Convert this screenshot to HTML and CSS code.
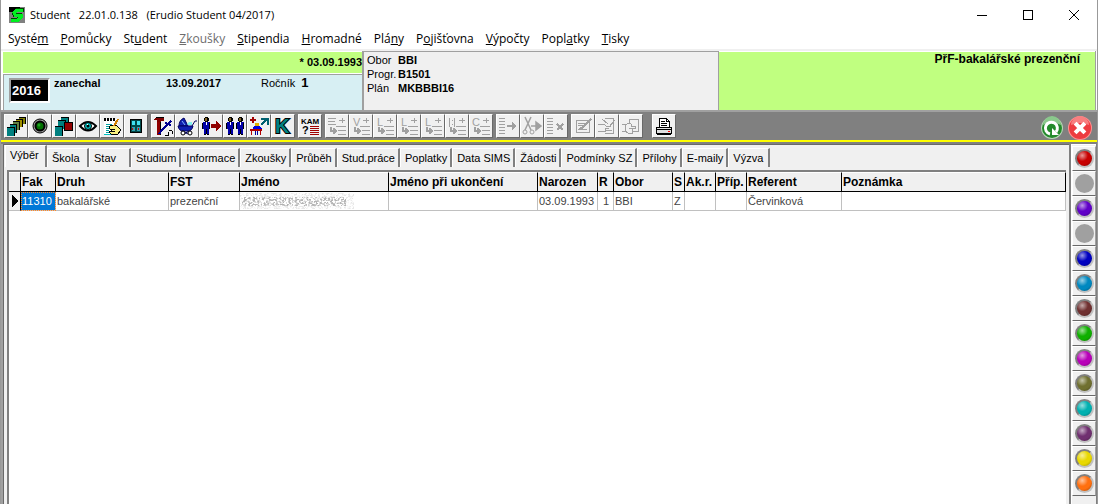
FILE: index.html
```
<!DOCTYPE html>
<html lang="cs">
<head>
  <meta charset="UTF-8">
  <meta name="viewport" content="width=device-width, initial-scale=1">
  <title>Student 22.01.0.138</title>
  <link rel="stylesheet" href="styles.css">
</head>
<body>
  <!-- shared icon parts -->
  <svg class="defs" aria-hidden="true">
    <defs>
      <symbol id="rows" viewBox="0 0 20 20">
        <path d="M12 4.500h6M15 2v5M9 10.500h10M11 14.500h8M11 18.500h8" stroke="#a0a0a0" fill="none"/>
        <path d="M3.500 11v4h4M6 12.500l3 2.500-3 2.500" stroke="#a0a0a0" stroke-width="2" fill="none"/>
      </symbol>
      <symbol id="man" viewBox="0 0 8 18">
        <path d="M3 0h3v1h1v3H6v1H3V4H2V1h1z" fill="#000"/>
        <path d="M3 1h2v3H3z" fill="#806020"/>
        <path d="M1 5h7v7H7v6H5v-5H4v5H2v-6H1z" fill="#0000a8"/>
        <path d="M0 6h1v6H0zM2 17h2v1H2zM5 17h2v1H5zM4 12h1v5H4zM7 6h1v6H7z" fill="#000"/>
        <path d="M4 5h1v3H4z" fill="#fff"/>
      </symbol>
      <filter id="noise" x="0" y="0" width="100%" height="100%">
        <feTurbulence type="fractalNoise" baseFrequency="0.450 0.600" numOctaves="2" seed="4"/>
        <feColorMatrix values="0 0 0 0 0.450  0 0 0 0 0.450  0 0 0 0 0.450  4 3 0 0 -3.200"/>
      </filter>
    </defs>
  </svg>

  <div class="window">
    <header class="titlebar">
      <svg class="app-icon" viewBox="0 0 16 16" aria-hidden="true">
        <path d="M0 0h16v16H0z" fill="#808080"/>
        <path d="M0 0h12L5 5H0z" fill="#000"/>
        <path d="M15 3H8L5 6l1 2h5v2l-2 3H2" fill="none" stroke="#004000" stroke-width="4"/>
        <path d="M14 3H8L5 6l1 2h6v2l-3 3H2" fill="none" stroke="#00f020" stroke-width="3"/>
      </svg>
      <h1>Student &nbsp; 22.01.0.138 &nbsp; (Erudio Student 04/2017)</h1>
      <div class="win-buttons">
        <button aria-label="Minimalizovat"><svg viewBox="0 0 10 10"><path d="M0 5.500h10"/></svg></button>
        <button aria-label="Maximalizovat"><svg viewBox="0 0 10 10"><path d="M.5.5h9v9h-9z"/></svg></button>
        <button aria-label="Zavřít"><svg viewBox="0 0 10 10"><path d="M0 0l10 10M10 0L0 10"/></svg></button>
      </div>
    </header>

    <nav class="menu">
      <button>Systé<u>m</u></button>
      <button><u>P</u>omůcky</button>
      <button>St<u>u</u>dent</button>
      <button disabled><u>Z</u>koušky</button>
      <button><u>S</u>tipendia</button>
      <button><u>H</u>romadné</button>
      <button>Plá<u>n</u>y</button>
      <button>P<u>o</u>jišťovna</button>
      <button><u>V</u>ýpočty</button>
      <button>Popl<u>a</u>tky</button>
      <button><u>T</u>isky</button>
    </nav>

    <section class="info">
      <div class="person">
        <div class="birth">* 03.09.1993</div>
        <div class="state">
          <input class="year" value="2016" aria-label="Rok" readonly>
          <b class="status">zanechal</b>
          <b class="date">13.09.2017</b>
          <span class="grade">Ročník <b>1</b></span>
        </div>
      </div>
      <dl class="study">
        <dt>Obor</dt><dd>BBI</dd>
        <dt>Progr.</dt><dd>B1501</dd>
        <dt>Plán</dt><dd>MKBBBI16</dd>
      </dl>
      <div class="faculty">PřF-bakalářské prezenční</div>
    </section>

    <div class="toolbar">
      <div class="group">
        <button aria-label="Výběr"><svg viewBox="0 0 20 20">
          <path d="M13 1h7v7h-7z" fill="#000"/><path d="M13 2h6v6h-6z" fill="#808000"/>
          <path d="M10 3h7v8h-7z" fill="#000"/><path d="M10 4h6v7h-6z" fill="#a09000"/>
          <path d="M7 5h7v9H7z" fill="#000"/><path d="M7 6h6v8H7z" fill="#608040"/>
          <path d="M4 8h7v9H4z" fill="#000"/><path d="M4 9h6v8H4z" fill="#008080"/>
          <path d="M1 11h8v9H1z" fill="#000"/><path d="M1 12h7v8H1z" fill="#008080"/>
        </svg></button>
        <button aria-label="Záznam"><svg class="smooth" viewBox="0 0 20 20">
          <circle cx="10" cy="10" r="7" fill="#a0a0a0" stroke="#000"/>
          <circle cx="10" cy="10" r="4.500" fill="#007000" stroke="#000" stroke-width="2"/>
          <circle cx="9" cy="9" r="1.500" fill="#20a020"/>
        </svg></button>
        <button aria-label="Kartotéka"><svg viewBox="0 0 20 20">
          <path d="M7 1h8v8H7z" fill="#000"/><path d="M7 2h7v7H7z" fill="#008080"/>
          <path d="M4 4h8v8H4z" fill="#000"/><path d="M4 5h7v8H4z" fill="#008080"/>
          <path d="M10 6h9v9h-9z" fill="#000"/><path d="M11 7h7v7h-7z" fill="#900000"/>
          <path d="M1 10h8v10H1z" fill="#000"/><path d="M1 11h7v9H1z" fill="#008080"/>
        </svg></button>
        <button aria-label="Náhled"><svg class="smooth" viewBox="0 0 20 20">
          <path d="M2 10q8-8 16 0-8 9-16 0z" fill="#fff" stroke="#000" stroke-width="2"/>
          <circle cx="10" cy="10" r="3.500" fill="#00c0c0" stroke="#000"/>
          <circle cx="10" cy="10" r="1.500"/><path d="M9 8h1v1H9z" fill="#fff"/>
        </svg></button>
        <button aria-label="Poznámky"><svg viewBox="0 0 20 20">
          <path d="M2 3h13v15H2z" fill="#fff"/><path d="M2 18.500h13" stroke="#00c0c0"/>
          <path d="M2 2h2v3H2zM5 2h2v3H5zM8 2h2v3H8zM11 2h2v3h-2z"/>
          <path d="M4 8.500h6M4 10.500h5M4 12.500h4M4 14.500h3M4 16.500h4" stroke="#00a0a0"/>
          <path d="M8 10l6-1 5 5-3 4H9l-2-2 3-1-3-3z" fill="#f8f080" stroke="#000"/>
          <path d="M9 13h4M9 15h4" stroke="#000"/>
          <path d="M16 3l-4 7" stroke="#d08000" stroke-width="2"/>
        </svg></button>
        <button aria-label="Okno"><svg viewBox="0 0 20 20">
          <path d="M4 3h12v14H4z" fill="#000"/><path d="M5 4h10v12H5z" fill="#004848"/>
          <path d="M6 5h3v4H6zM11 5h3v4h-3z" fill="#40e0f0"/>
          <path d="M6 11h3v4H6zM11 11h3v4h-3z" fill="#30a0b0"/>
          <path d="M6 12h1v2H6zM12 12h1v2h-1z" fill="#c00"/>
        </svg></button>
      </div>
      <div class="group">
        <button aria-label="Nástroje"><svg viewBox="0 0 20 20">
          <path d="M0 4l3-3h8v4H8v1H4V4z" fill="#800000"/>
          <path d="M4 6h4v13H4z" fill="#900000"/><path d="M7 6h1v13H7zM3 1h8v1H3z"/>
          <path d="M18 5l-3 3-3-1M15 8l-6 6-3 4M18 9l-3-1" fill="none" stroke="#000090" stroke-width="2"/>
          <path d="M12 19h3v-3M16 14l3 1v3" fill="none" stroke="#000"/>
        </svg></button>
        <button aria-label="Kočárek"><svg class="smooth" viewBox="0 0 20 20">
          <path d="M2 10q0-6 5-8l4 8z" fill="#1020b0" stroke="#000060"/>
          <path d="M1 10h15q-1 5-5 5H6q-4 0-5-5z" fill="#1020b0" stroke="#000060"/>
          <path d="M10 8l2-2h3v3h-4z" fill="#80f0f0"/>
          <path d="M15 10l3-5h2M5 15l6 3M12 15l-5 3" fill="none" stroke="#000060"/>
          <path d="M5 5l3 4" stroke="#80b0ff"/>
          <circle cx="6" cy="17" r="2" fill="#fff" stroke="#000"/>
          <circle cx="13" cy="17" r="2" fill="#fff" stroke="#000"/>
        </svg></button>
        <button aria-label="Převod studenta"><svg viewBox="0 0 20 20">
          <use href="#man" x="1" y="1" width="8" height="18"/>
          <path d="M10 8h5V5l5 5-5 5v-3h-5z" fill="#900000"/>
        </svg></button>
        <button aria-label="Kopie studenta"><svg viewBox="0 0 20 20">
          <use href="#man" x="1" y="1" width="8" height="18"/>
          <use href="#man" x="11" y="1" width="8" height="18"/>
        </svg></button>
        <button aria-label="Výuka"><svg viewBox="0 0 20 20">
          <path d="M1 4h6M4 1v6" stroke="#a00000" stroke-width="2"/>
          <path d="M12 9l6-6M12 3h7v6" fill="none" stroke="#006070" stroke-width="2"/>
          <path d="M6 7h4v3H6z" fill="#e0b000"/><path d="M5 10h6l2 3H4z" fill="#0000e0"/>
          <path d="M1 13h12v2H1zM2 15h1v4H2zM11 15h1v4h-1z" fill="#b00000"/>
          <path d="M6 15h1v4H6zM8 15h1v4H8z" fill="#0000a0"/>
        </svg></button>
        <button aria-label="Kredity"><svg viewBox="0 0 20 20">
          <text class="letter-k" x="2" y="17">K</text>
        </svg></button>
      </div>
      <div class="group">
        <button aria-label="Kam"><svg viewBox="0 0 20 20">
          <text class="letters" x="1" y="8">KAM</text>
          <text class="question" x="2" y="18">?</text>
          <path d="M10 10.500h9M10 12.500h9M10 14.500h9M10 16.500h9M10 18.500h9" stroke="#a00000"/>
        </svg></button>
      </div>
      <div class="group">
        <button disabled aria-label="Přidat řádek"><svg viewBox="0 0 20 20"><use href="#rows"/><path d="M1 2.500h8M1 5.500h7M1 8.500h8" stroke="#a0a0a0"/></svg></button>
        <button disabled aria-label="Přidat V"><svg viewBox="0 0 20 20"><use href="#rows"/><text class="mark" x="2" y="10">V</text></svg></button>
        <button disabled aria-label="Přidat L"><svg viewBox="0 0 20 20"><use href="#rows"/><text class="mark" x="2" y="10">L</text></svg></button>
        <button disabled aria-label="Přidat L 2"><svg viewBox="0 0 20 20"><use href="#rows"/><text class="mark" x="2" y="10">L</text></svg></button>
        <button disabled aria-label="Přidat L 3"><svg viewBox="0 0 20 20"><use href="#rows"/><text class="mark" x="2" y="10">L</text></svg></button>
        <button disabled aria-label="Přidat blok"><svg viewBox="0 0 20 20"><use href="#rows"/><path d="M2.500 2v9M7.500 2v9M5 4.500h1M5 8.500h1" stroke="#a0a0a0"/></svg></button>
        <button disabled aria-label="Přidat C"><svg viewBox="0 0 20 20"><use href="#rows"/><text class="mark" x="1" y="10">C</text></svg></button>
      </div>
      <div class="group">
        <button disabled aria-label="Přesunout"><svg viewBox="0 0 20 20">
          <path d="M1 2.500h6M1 5.500h6M1 8.500h6M1 11.500h6M1 14.500h6M1 17.500h6" stroke="#a0a0a0"/>
          <path d="M9 9h5V6l5 4-5 4v-3H9z" fill="#a0a0a0"/>
        </svg></button>
        <button disabled aria-label="Vyjmout"><svg class="smooth" viewBox="0 0 20 20">
          <path d="M3 1l6 13M9 1L3 14M9 10h5M14 6l5 4-5 4z" fill="#a0a0a0" stroke="#a0a0a0" stroke-width="1.500"/>
          <circle cx="3" cy="16" r="2" fill="none" stroke="#a0a0a0"/><circle cx="10" cy="16" r="2" fill="none" stroke="#a0a0a0"/>
        </svg></button>
        <button disabled aria-label="Smazat řádek"><svg viewBox="0 0 20 20">
          <path d="M1 2.500h6M1 5.500h6M1 8.500h6M1 11.500h6M1 14.500h6M1 17.500h6" stroke="#a0a0a0"/>
          <path d="M11 8l6 6M17 8l-6 6" stroke="#a0a0a0" stroke-width="2"/>
        </svg></button>
      </div>
      <div class="group">
        <button disabled aria-label="Upravit"><svg viewBox="0 0 20 20">
          <path d="M3.500 4.500h13v12h-13z" fill="none" stroke="#a0a0a0"/>
          <path d="M5 7.500h7M5 9.500h5M5 13.500h9" fill="none" stroke="#a0a0a0"/>
          <path d="M18 3l-9 9-3 1" fill="none" stroke="#a0a0a0" stroke-width="2"/>
        </svg></button>
        <button disabled aria-label="Upravit zápis"><svg viewBox="0 0 20 20">
          <path d="M7.500 2.500h9v15h-9M1 8.500h6l3 2h4M1 15.500h7l1-3h3" fill="none" stroke="#a0a0a0"/>
          <path d="M5 3l6 5M18 4l-6 7M9 14.500h6" stroke="#a0a0a0" fill="none"/>
        </svg></button>
        <button disabled aria-label="Předat"><svg viewBox="0 0 20 20">
          <path d="M8.500 7V3.500h9v12h-6M1 8.500h3v7H1M4 9l4-2 2 1v2h4v2H8M4 15l3 2h4v-5" fill="none" stroke="#a0a0a0"/>
        </svg></button>
      </div>
      <div class="group print">
        <button aria-label="Tisk"><svg viewBox="0 0 20 20">
          <path d="M5.500 11V2.500h7l3 3V11z" fill="#fff" stroke="#000"/>
          <path d="M7 5.500h4M7 7.500h6M7 9.500h6M12.500 2v3h3" fill="none" stroke="#000"/>
          <path d="M2.500 11.500h15v6h-15z" fill="#e0e0e0" stroke="#000"/>
          <path d="M2 13h16v1H2zM3 17h14v2H3z"/><path d="M14 15h2v1h-2z" fill="#f00"/>
        </svg></button>
      </div>
      <div class="round">
        <button aria-label="Obnovit"><svg class="smooth" viewBox="0 0 24 24">
          <circle cx="12" cy="12" r="11" fill="#b8d8b8"/><circle cx="12" cy="12" r="10" fill="#238a2b"/>
          <path d="M3 9a9 9 0 0 1 18 0q-9-5-18 0z" fill="#8ac88c"/>
          <path d="M10 18a6 6 0 1 1 6-2" fill="none" stroke="#fff" stroke-width="3"/><path d="M12 12v7h7z" fill="#fff"/>
        </svg></button>
        <button aria-label="Konec"><svg class="smooth" viewBox="0 0 24 24">
          <circle cx="12" cy="12" r="12" fill="#ff9090"/><circle cx="12" cy="12" r="11" fill="#ed3b40"/>
          <path d="M3 9a9 9 0 0 1 18 0q-9-4-18 0z" fill="#f87f80"/>
          <path d="M8.500 8.500l7 7M15.500 8.500l-7 7" stroke="#fff" stroke-width="4" stroke-linecap="square"/>
        </svg></button>
      </div>
    </div>

    <div class="work">
      <main class="content">
        <div class="tabs" role="tablist">
          <button role="tab" aria-selected="true">Výběr</button>
          <button role="tab">Škola</button>
          <button role="tab">Stav</button>
          <button role="tab">Studium</button>
          <button role="tab">Informace</button>
          <button role="tab">Zkoušky</button>
          <button role="tab">Průběh</button>
          <button role="tab">Stud.práce</button>
          <button role="tab">Poplatky</button>
          <button role="tab">Data SIMS</button>
          <button role="tab">Žádosti</button>
          <button role="tab">Podmínky SZ</button>
          <button role="tab">Přílohy</button>
          <button role="tab">E-maily</button>
          <button role="tab">Výzva</button>
        </div>
        <div class="grid">
          <table>
            <colgroup>
              <col class="c-mark"><col class="c-fak"><col class="c-druh"><col class="c-fst">
              <col class="c-name"><col class="c-name"><col class="c-born"><col class="c-r">
              <col class="c-obor"><col class="c-s"><col class="c-ak"><col class="c-ak">
              <col class="c-ref"><col>
            </colgroup>
            <thead>
              <tr>
                <th></th><th>Fak</th><th>Druh</th><th>FST</th><th>Jméno</th>
                <th>Jméno při ukončení</th><th>Narozen</th><th>R</th><th>Obor</th>
                <th>S</th><th>Ak.r.</th><th>Příp.</th><th>Referent</th><th>Poznámka</th>
              </tr>
            </thead>
            <tbody>
              <tr>
                <td class="marker"><svg viewBox="0 0 6 12"><path d="M0 0l6 6-6 6z"/></svg></td>
                <td class="selected">11310</td>
                <td>bakalářské</td>
                <td>prezenční</td>
                <td class="hidden-name">
                  <svg viewBox="0 0 114 16" aria-label="skryté jméno">
                    <rect width="114" height="16" filter="url(#noise)" opacity=".3"/>
                    <rect x="2" y="4" width="104" height="9" filter="url(#noise)"/>
                  </svg>
                </td>
                <td></td>
                <td>03.09.1993</td>
                <td class="num">1</td>
                <td>BBI</td>
                <td>Z</td>
                <td></td>
                <td></td>
                <td>Červinková</td>
                <td></td>
              </tr>
            </tbody>
          </table>
        </div>
      </main>
      <aside class="colors">
        <button aria-label="Červená"><span class="ball red"></span></button>
        <button aria-label="Volná 1" disabled><span class="ball off"></span></button>
        <button aria-label="Fialová"><span class="ball violet"></span></button>
        <button aria-label="Volná 2" disabled><span class="ball off"></span></button>
        <button aria-label="Modrá"><span class="ball blue"></span></button>
        <button aria-label="Azurová"><span class="ball sky"></span></button>
        <button aria-label="Hnědá"><span class="ball brown"></span></button>
        <button aria-label="Zelená"><span class="ball green"></span></button>
        <button aria-label="Purpurová"><span class="ball magenta"></span></button>
        <button aria-label="Olivová"><span class="ball olive"></span></button>
        <button aria-label="Tyrkysová"><span class="ball teal"></span></button>
        <button aria-label="Švestková"><span class="ball plum"></span></button>
        <button aria-label="Žlutá"><span class="ball yellow"></span></button>
        <button aria-label="Oranžová"><span class="ball orange"></span></button>
      </aside>
    </div>
  </div>
</body>
</html>
```
FILE: styles.css
```
* {
  box-sizing: border-box;
  margin: 0;
  padding: 0;
}

body {
  font-family: "Liberation Sans", Arial, sans-serif;
  font-size: 11px;
  line-height: 14px;
  color: #000;
  background: #fff;
}

button {
  font: inherit;
  color: inherit;
  background: none;
  border: none;
}

svg {
  display: block;
  overflow: visible;
  shape-rendering: crispEdges;
}

.smooth {
  shape-rendering: auto;
}

.defs {
  position: absolute;
  width: 0;
  height: 0;
}

.window {
  display: flex;
  flex-direction: column;
  height: 100vh;
  overflow: hidden;
  border-left: 1px solid #999;
  border-right: 1px solid #999;
}

/* Title and menu */
.titlebar {
  display: flex;
  align-items: center;
  height: 29px;
  padding-left: 8px;
  font-family: "Open Sans", "Noto Sans", sans-serif;
}

.app-icon {
  width: 16px;
  height: 16px;
  margin-right: 5px;
}

h1 {
  font-size: 11px;
  font-weight: normal;
}

.win-buttons {
  display: flex;
  margin-left: auto;
}

.win-buttons button {
  display: flex;
  justify-content: center;
  width: 46px;
}

.win-buttons svg {
  width: 10px;
  height: 10px;
  fill: none;
  stroke: #000;
}

.menu {
  display: flex;
  gap: 12px;
  height: 22px;
  padding: 0 7px;
  border-bottom: 2px solid #f0f0f0;
  font-family: "Open Sans", "Noto Sans", sans-serif;
  font-size: 12px;
}

.menu button:disabled {
  color: #6d6d6d;
}

/* Student header */
.info {
  display: flex;
  height: 59px;
  margin: 0 1px 0 0;
  padding-left: 2px;
  border-right: 1px solid #a0a0a0;
  background: #fff;
}

.person {
  display: flex;
  flex-direction: column;
  width: 360px;
  border-right: 1px solid #a0a0a0;
}

.birth {
  height: 22px;
  padding-top: 3px;
  border-top: 1px solid #fff;
  background: #c0ff80;
  font-weight: bold;
  text-align: right;
}

.state {
  display: flex;
  flex: 1;
  align-items: flex-start;
  margin-top: 1px;
  padding: 1px 0 0 5px;
  border-top: 1px solid #a0a0a0;
  border-left: 1px solid #a0a0a0;
  background: #d7eff3;
}

.year {
  width: 41px;
  height: 25px;
  margin: 2px 4px 0 0;
  padding-left: 1px;
  border: 2px solid;
  border-color: #a0a0a0 #fff #fff #a0a0a0;
  background: #000;
  color: #fff;
  font: bold 13px "Liberation Sans", Arial, sans-serif;
}

.status {
  width: 112px;
}

.date {
  width: 95px;
}

.grade b {
  margin-left: 3px;
  font-size: 13px;
}

.study {
  display: grid;
  grid-template-columns: 31px 1fr;
  align-content: start;
  width: 356px;
  padding: 1px 0 0 3px;
  border: 1px solid #a0a0a0;
  border-width: 1px 1px 0;
  background: #f0f0f0;
}

.study dd {
  font-weight: bold;
}

.faculty {
  flex: 1;
  padding-right: 15px;
  border-top: 1px solid #fff;
  background: #c0ff80;
  font-size: 12px;
  font-weight: bold;
  text-align: right;
}

/* Toolbar */
.toolbar {
  display: flex;
  gap: 3px;
  align-items: center;
  height: 34px;
  padding: 0 5px 0 3px;
  border-top: 2px solid #a0a0a0;
  background: linear-gradient(#808080 28px, #ff0 28px, #ff0 30px, #808080 30px);
}

.group {
  display: flex;
  height: 28px;
}

.group button {
  width: 24px;
  height: 24px;
  padding: 1px;
  border: 1px solid;
  border-color: #fff #696969 #696969 #fff;
  background: #f0f0f0;
}

.group svg {
  width: 20px;
  height: 20px;
}

.print {
  margin-left: 6px;
}

.round {
  display: flex;
  gap: 4px;
  height: 28px;
  margin-left: auto;
}

.round svg {
  width: 24px;
  height: 24px;
}

.letters {
  font: bold 8px "Liberation Sans", Arial, sans-serif;
}

.letter-k {
  font: bold 20px "Liberation Sans", Arial, sans-serif;
  fill: #008080;
  stroke: #000;
  stroke-width: 2px;
  paint-order: stroke;
}

.question {
  font: bold 11px "Liberation Sans", Arial, sans-serif;
}

.mark {
  font: 11px "Liberation Sans", Arial, sans-serif;
  fill: #a0a0a0;
}

/* Tabs and grid */
.work {
  display: flex;
  flex: 1;
  min-height: 0;
  padding-left: 2px;
  border-right: 1px solid #808080;
  background: #a0a0a0;
}

.content {
  display: flex;
  flex: 1;
  flex-direction: column;
  min-width: 0;
  border-top: 1px solid #696969;
  border-left: 1px solid #696969;
  background: #f0f0f0;
}

.tabs {
  display: flex;
  align-items: flex-end;
  height: 22px;
  padding-left: 1px;
}

.tabs button {
  min-width: 42px;
  height: 19px;
  padding: 0 3px 0 4px;
  border-top: 1px solid #fff;
  border-left: 1px solid #fff;
  border-right: 2px solid #808080;
  font-size: 11px;
  text-align: left;
  white-space: nowrap;
}

.tabs button[aria-selected="true"] {
  height: 22px;
  padding-bottom: 3px;
}

.grid {
  flex: 1;
  margin: 3px 5px 0 3px;
  border-top: 2px solid #808080;
  border-left: 2px solid #808080;
  background: #fff;
}

table {
  width: 100%;
  table-layout: fixed;
  border-collapse: separate;
  border-spacing: 0;
}

th,
td {
  height: 20px;
  padding: 0 1px;
  overflow: hidden;
  text-align: left;
  white-space: nowrap;
}

th {
  border-top: 1px solid #fff;
  border-right: 1px solid #000;
  border-bottom: 1px solid #000;
  background: #f0f0f0;
  font-size: 12px;
}

td {
  height: 19px;
  border-right: 1px solid #c0c0c0;
  border-bottom: 1px solid #c0c0c0;
  color: #444;
}

.c-mark { width: 12px; }
.c-fak { width: 35px; }
.c-druh { width: 113px; }
.c-fst { width: 71px; }
.c-name { width: 149px; }
.c-born { width: 60px; }
.c-r { width: 16px; }
.c-obor { width: 59px; }
.c-s { width: 12px; }
.c-ak { width: 31px; }
.c-ref { width: 95px; }

.marker {
  padding-left: 3px;
  border-right-color: #000;
  background: #f0f0f0;
}

.marker svg {
  width: 6px;
  height: 12px;
}

.selected {
  background: #0078d7;
  color: #fff;
  outline: 1px dotted #ff8728;
  outline-offset: -1px;
}

.hidden-name {
  padding: 0;
}

.hidden-name svg {
  width: 114px;
  height: 16px;
}

.num {
  padding-right: 4px;
  text-align: right;
}

/* Colour buttons */
.colors {
  width: 25px;
  padding-top: 1px;
  border-top: 1px solid #fff;
  border-left: 1px solid #fff;
  background: #f0f0f0;
  box-shadow: -2px 0 0 #808080;
}

.colors button {
  display: flex;
  align-items: center;
  justify-content: center;
  width: 24px;
  height: 25px;
  border: 1px solid;
  border-color: #fff #a0a0a0 #696969 #fff;
}

.ball {
  width: 19px;
  height: 19px;
  border: 2px solid;
  border-color: #808080 #c0c0c0 #c0c0c0 #808080;
  border-radius: 50%;
  background-image: radial-gradient(circle at 35% 30%, rgba(255, 255, 255, 0.6), transparent 40%, transparent 60%, rgba(0, 0, 0, 0.4));
}

.red { background-color: #c80000; }
.violet { background-color: #6000c8; }
.blue { background-color: #0000c0; }
.sky { background-color: #0088c0; }
.brown { background-color: #703030; }
.green { background-color: #10b000; }
.magenta { background-color: #b800b8; }
.olive { background-color: #707030; }
.teal { background-color: #00b0b0; }
.plum { background-color: #703070; }
.yellow { background-color: #e8d800; }
.orange { background-color: #ff7010; }

.off {
  border-color: #a0a0a0;
  background: #a0a0a0;
}
```
